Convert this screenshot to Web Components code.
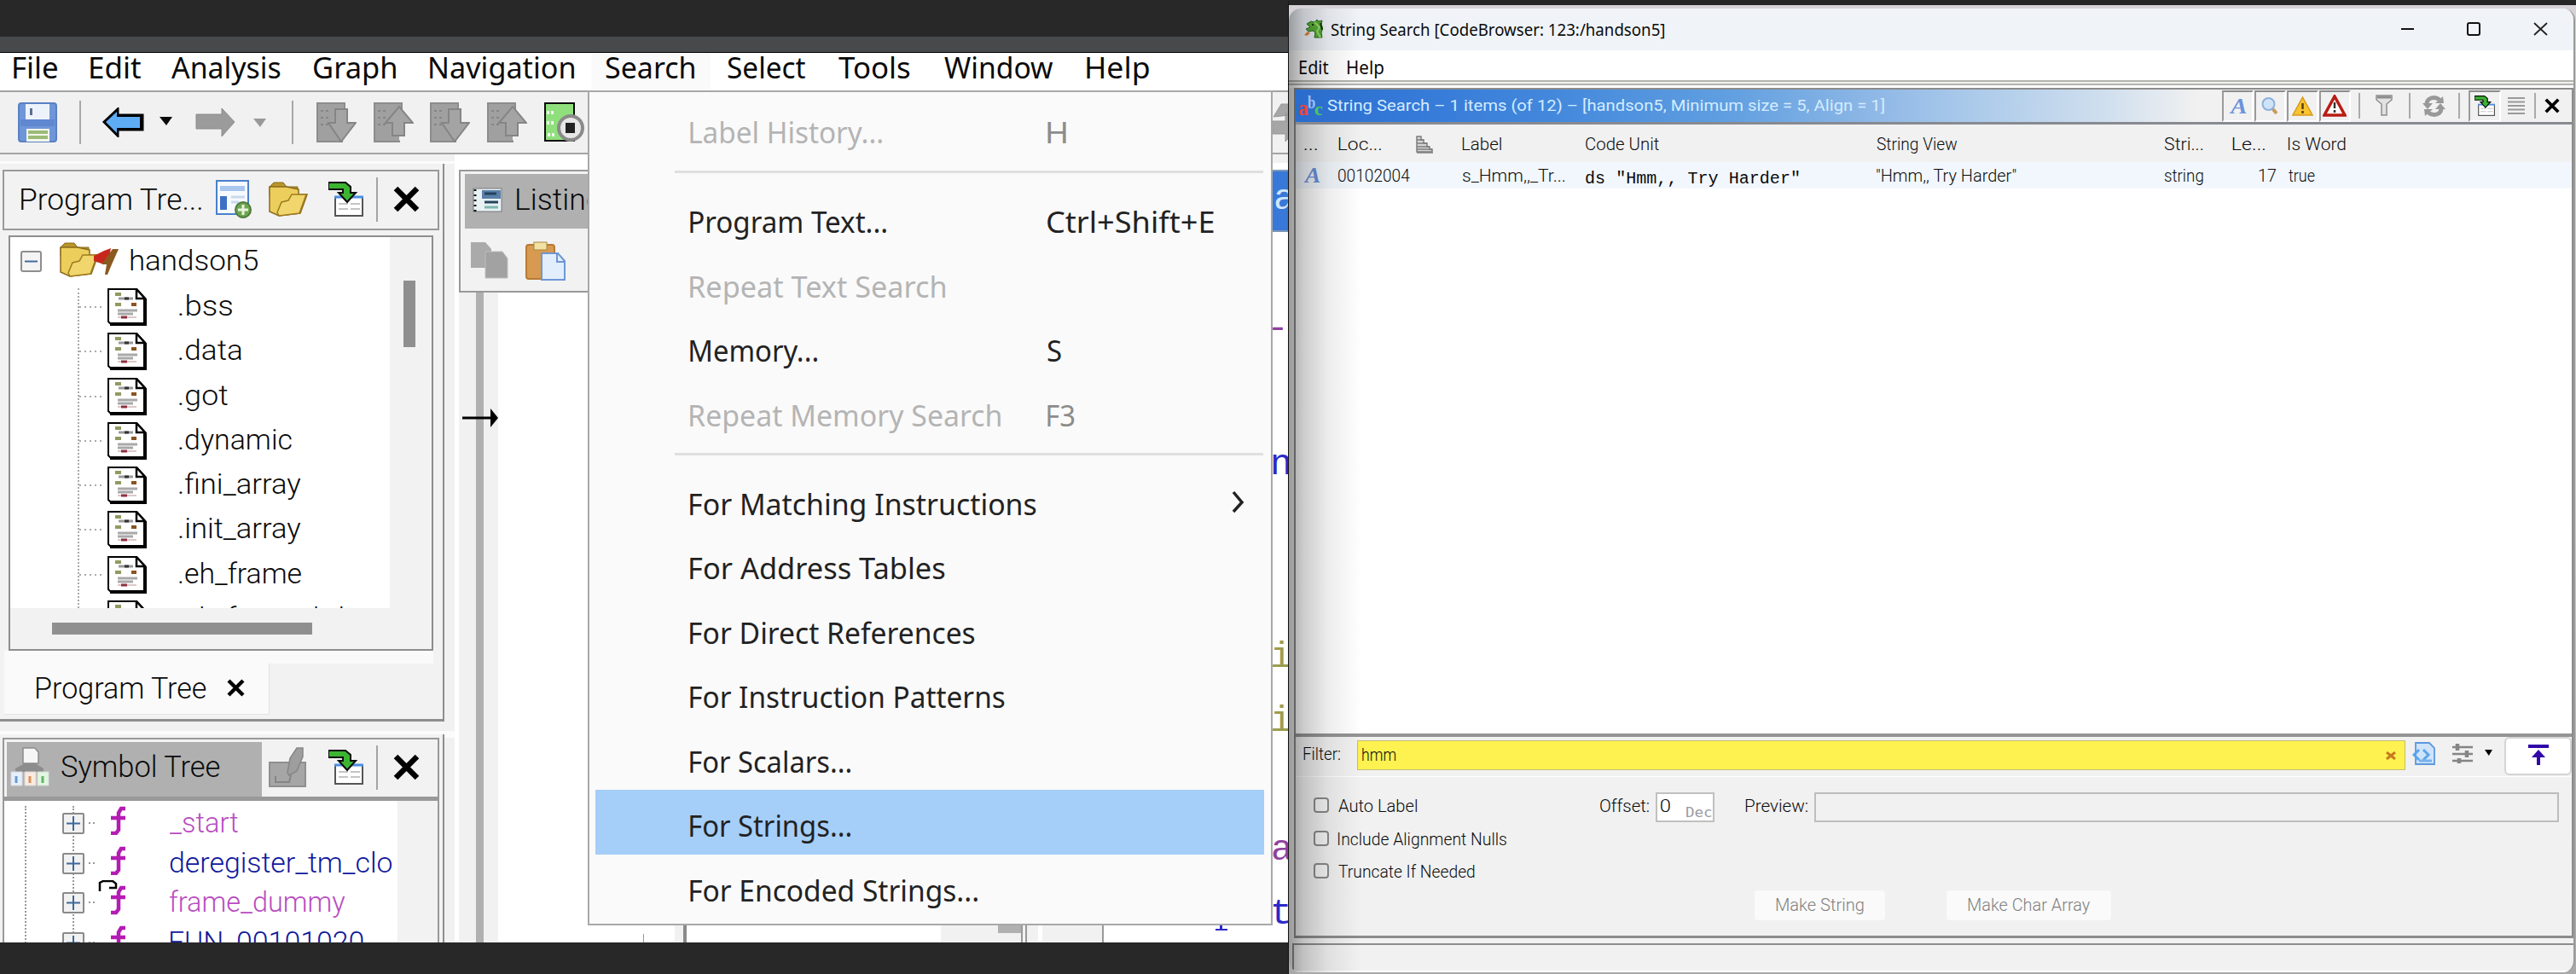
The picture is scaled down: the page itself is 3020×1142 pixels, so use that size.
<!DOCTYPE html>
<html lang="en">
<head>
<meta charset="utf-8">
<title>CodeBrowser</title>
<style>
  body {
    margin: 0;
    display: flex;
    width: 3020px;
    height: 1142px;
    overflow: hidden;
    background: #282828;
    font-family: Roboto, "Liberation Sans", sans-serif;
    font-weight: 300;
    color: #0a0a0a;
  }
</style>
</head>
<body>
<code-browser></code-browser>
<search-window></search-window>

<script>
function define(name, html) {
  const template = document.createElement('template');
  template.innerHTML = html;
  customElements.define(name, class extends HTMLElement {
    constructor() {
      super();
      this.attachShadow({ mode: 'open' });
      this.shadowRoot.appendChild(template.content.cloneNode(true));
    }
  });
}

const ctx = document.createElement('canvas').getContext('2d');

// One line of text squeezed to an ink width (w), with its baseline b pixels below the top.
class FitText extends HTMLElement {
  constructor() {
    super();
    this.attachShadow({ mode: 'open' });
    this.shadowRoot.innerHTML = `
      <style>
        :host { display: block; flex: none; }
        span { display: block; width: max-content; white-space: nowrap; transform-origin: 0 0; }
      </style>
      <span><slot></slot></span>`;
  }

  connectedCallback() {
    const cs = getComputedStyle(this);
    ctx.font = `${cs.fontStyle} ${cs.fontWeight} ${cs.fontSize} ${cs.fontFamily}`;
    const m = ctx.measureText(this.textContent);
    const left = -m.actualBoundingBoxLeft;
    const ink = m.actualBoundingBoxRight - left;
    const w = parseFloat(this.getAttribute('w')) || ink;
    const b = parseFloat(this.getAttribute('b'));
    const mid = (m.fontBoundingBoxAscent - m.fontBoundingBoxDescent) / 2;
    const line = 2 * (b - mid) + 'px';
    this.style.width = w + 'px';
    this.style.height = line;
    this.style.lineHeight = line;
    const span = this.shadowRoot.querySelector('span');
    span.style.transform = `scaleX(${w / ink}) translateX(${-left}px)`;
  }
}
customElements.define('fit-text', FitText);

const sheet = (inner) => `<path d="M1 1h22l10 0v38H1z" fill="#a0a0a0" stroke="#8c8c8c" stroke-width="2"/>
  <path d="M5 10h12M5 18h10M5 26h12" stroke="#858585" stroke-width="2" stroke-dasharray="3 3"/>
  <path d="M1 38v8h30" fill="none" stroke="#8c8c8c" stroke-width="3"/><path d="M2 38h28v7H2z" fill="#a0a0a0"/>${inner}`;
const down = '<path d="M22 8h14v16h10L29 46 14 24h8z" fill="#a4a4a4" stroke="#858585" stroke-width="2"/>';
const up = '<path d="M22 39h14V24h10L30 5 14 24h8z" fill="#a4a4a4" stroke="#858585" stroke-width="2"/>';
const folder = '<path d="M1 6l5-5h11l4 5h13v10H1z" fill="#b8962a" stroke="#8a6a1c"/><path d="M1 6h20l14 3v6l10 0-8 22-25 3L1 35z" fill="#ecce5c" stroke="#8a6a1c" stroke-width="1.5"/><path d="M10 36l5-12 8-2 4-7h17l-8 22-24 3z" fill="#f0d66c" stroke="#a07c20" stroke-width="1.5"/>';

const icons = {
  save: ['0 0 46 47', `<rect x="1" y="1" width="44" height="45" rx="3" fill="#6f96d8" stroke="#5a80c4" stroke-width="2"/>
    <rect x="9" y="2" width="28" height="18" fill="#eef3fb"/><rect x="14" y="7" width="3" height="8" fill="#5a6f98"/>
    <rect x="3" y="20" width="40" height="8" fill="#5f88d0"/><rect x="10" y="31" width="27" height="15" fill="#f2f7ec"/>
    <path d="M12 35h23M12 41h23" stroke="#9cbb78" stroke-width="4"/>`],
  back: ['0 0 49 35', `<path d="M2 17L18 2v7h29v17H18v7z" fill="#000" stroke="#000" stroke-width="3"/><path d="M4 17L17 5v6h27v13H17v6z" fill="#5eacf4"/>`],
  forward: ['0 0 47 35', '<path d="M46 17L31 1v7H1v17h30v9z" fill="#9b9b9b" stroke="#8c8c8c"/>'],
  tri: ['0 0 15 10', '<path d="M0 0h15L8 10z" fill="currentColor"/>'],
  nextdown: ['0 0 47 47', sheet(down)],
  nextup: ['0 0 47 47', sheet(up)],
  snapshot: ['0 0 47 47', `<rect x="1" y="1" width="34" height="44" fill="#8fe07c" stroke="#0c0c0c" stroke-width="2"/>
    <path d="M3 12h8M3 24h8M4 38h9" stroke="#f4f4f4" stroke-width="4" stroke-dasharray="3 2"/>
    <circle cx="31" cy="30" r="14" fill="#e6e6e6" stroke="#8a8a8a" stroke-width="4"/><rect x="25" y="24" width="11" height="12" fill="#222"/>`],
  grayarrow: ['0 0 30 47', '<path d="M1 17l9-15 14 0-4 13zM0 22h15V12l15 16-15 18V37H0z" fill="#a6a6a6" stroke="#979797"/>'],
  newtree: ['0 0 43 45', `<rect x="1" y="1" width="37" height="39" fill="#f6faff" stroke="#4a80cc" stroke-width="2"/><rect x="5" y="7" width="29" height="6" fill="#a9c6ee"/>
    <rect x="5" y="19" width="8" height="16" fill="#3d6fc4"/><path d="M18 20h16M18 26h9" stroke="#cbd9ee" stroke-width="3"/>
    <circle cx="32" cy="35" r="9" fill="#6ea552" stroke="#4f7c3a" stroke-width="2"/><path d="M32 29v12M26 35h12" stroke="#e8f4dc" stroke-width="3"/>`],
  folder: ['0 0 46 41', folder],
  folderopen: ['0 0 70 42', folder + '<path d="M40 16l12-6 8-3-3 16-8 2-9-3z" fill="#c8281c"/><path d="M62 8h7l-8 18-5 12h-3l2-12-6 0z" fill="#8a5a20"/>'],
  snap: ['0 0 41 41', `<rect x="8" y="18" width="32" height="22" fill="#fff" stroke="#555" stroke-width="2"/><path d="M7 18h34" stroke="#4a90e0" stroke-width="3"/>
    <path d="M12 26h11M26 26h11M12 32h11M26 32h11" stroke="#c4c4c4" stroke-width="2"/>
    <path d="M0 1h20l6 5v7h6L22 24 12 13h5V9H0z" fill="#3cb432" stroke="#0a0a0a" stroke-width="2"/>`],
  cross: ['0 0 31 31', '<path d="M3 3l25 25M28 3L3 28" stroke="#000" stroke-width="6.5"/>'],
  doc: ['0 0 46 44', `<path d="M1 1h33l10 11v30H4l-3-3z" fill="#fff" stroke="#000" stroke-width="2"/><path d="M3 42h41V13" fill="none" stroke="#000" stroke-width="4"/><path d="M34 1v11h10z" fill="#fff" stroke="#000" stroke-width="2.5"/>
    <path d="M9 7h7" stroke="#8f9a62" stroke-width="4"/><path d="M13 12h17" stroke="#9a9a9a" stroke-width="3"/><path d="M20 12h5" stroke="#333" stroke-width="3"/>
    <path d="M9 19h7" stroke="#8f9a62" stroke-width="4"/><path d="M28 19h6" stroke="#8a5420" stroke-width="4"/><path d="M12 26h23M12 30h18" stroke="#a9a9a9" stroke-width="3"/><path d="M12 34h22" stroke="#dcc8c8" stroke-width="2"/><path d="M16 34h7" stroke="#8c3040" stroke-width="3"/>`],
  minus: ['0 0 25 25', '<rect x="1" y="1" width="23" height="23" rx="2" fill="#f4f4f4" stroke="#8e8e8e" stroke-width="2"/><path d="M5 12.500h15" stroke="#456aa0" stroke-width="2"/>'],
  plus: ['0 0 26 25', '<rect x="1" y="1" width="24" height="23" rx="1" fill="#f1f1f1" stroke="#8a8a8a" stroke-width="2"/><path d="M5 12.500h16M13 4v17" stroke="#3f689c" stroke-width="2"/>'],
  func: ['0 0 20 34', '<path d="M18 3h-5l-3 5v20l-3 4H1M1 14h17" fill="none" stroke="#b41cb4" stroke-width="4.500"/>'],
  thunk: ['0 0 34 47', '<path d="M2 13V3l4-2h11l4 3v5h-8" fill="none" stroke="#000" stroke-width="2.500"/><g transform="translate(14 6)"><path d="M18 3h-5l-3 5v20l-3 4H1M1 14h17" fill="none" stroke="#b41cb4" stroke-width="4.500"/></g>'],
  symtree: ['0 0 46 46', `<path d="M15 1h14l4 5v13H15z" fill="#f6f6f6" stroke="#8c8c8c" stroke-width="1.500"/><path d="M17 19h12l10 6v4H6v-4z" fill="#8d8d8d"/>
    <g stroke="#d8d8d8"><path d="M1 29h13v16H1z" fill="#e4f0fb"/><path d="M17 29h13v16H17z" fill="#fbeade"/><path d="M32 29h13v16H32z" fill="#e0f6e0"/></g>
    <path d="M7 34v8" stroke="#6a9ad0" stroke-width="3"/><path d="M23 34v8" stroke="#d8925c" stroke-width="3"/><path d="M38 34v8" stroke="#64b464" stroke-width="3"/>`],
  edit: ['0 0 44 47', '<path d="M1 18h42v28H1z" fill="#a6a6a6" stroke="#8f8f8f" stroke-width="2"/><path d="M8 34v7h16l2-8" fill="none" stroke="#858585" stroke-width="2"/><path d="M22 30l3-17 8-12h7v10l-7 17-9 5z" fill="#9e9e9e" stroke="#868686" stroke-width="1.500"/>'],
  listing: ['0 0 35 29', '<rect x="1" y="1" width="33" height="27" fill="#e8f2f4" stroke="#777"/><path d="M3 2v26" stroke="#111" stroke-width="3" stroke-dasharray="2 4"/><path d="M11 3h22v10H11z" fill="#5b7fa8"/><path d="M14 7h14M14 17h16" stroke="#25425e" stroke-width="3"/><path d="M14 23h16" stroke="#7fb7b0" stroke-width="3"/>'],
  copy: ['0 0 45 44', '<path d="M1 1h17l7 8v22H1z" fill="#aaa"/><path d="M18 12h20l6 8v23H18z" fill="#a2a2a2" stroke="#bdbdbd"/>'],
  paste: ['0 0 47 46', '<rect x="1" y="4" width="33" height="40" rx="3" fill="#d79a50" stroke="#b87a34" stroke-width="2"/><rect x="10" y="1" width="15" height="9" fill="#f1e2a4" stroke="#a8863c"/><path d="M19 14h19l8 9v22H19z" fill="#e2eefc" stroke="#6d97d6" stroke-width="2"/><path d="M37 14v10h9" fill="none" stroke="#6d97d6" stroke-width="2"/>'],
  ip: ['0 0 42 22', '<path d="M0 11h34" stroke="#000" stroke-width="3"/><path d="M33 0l9 11-9 11z" fill="#000"/>'],
  chevron: ['0 0 15 27', '<path d="M2 2l10 12L2 25" fill="none" stroke="#222" stroke-width="3.500"/>'],
  dragon: ['0 0 22 23', '<path d="M3 5l5-3 4 1 3-3 2 2 4-1-1 5 2 4-2 5 1 6h-9l1-6-3-2-5 1-3-3 5-2z" fill="#58b038" stroke="#2c6a20"/><path d="M0 18l4-4 3 2-4 3z" fill="#e08838"/><path d="M12 3l6 6-3 5 4 7" fill="none" stroke="#9ade6c" stroke-width="2"/><path d="M9 6h2M19 4l2 8" stroke="#14380c" stroke-width="2"/>'],
  winmin: ['0 0 15 16', '<path d="M0 8h15" stroke="#111" stroke-width="2"/>'],
  winmax: ['0 0 16 16', '<rect x="1" y="1" width="14" height="14" rx="2" fill="none" stroke="#111" stroke-width="2"/>'],
  winclose: ['0 0 17 16', '<path d="M1 1l15 14M16 1L1 15" stroke="#222" stroke-width="1.800"/>'],
  mag: ['0 0 20 21', '<path d="M12 12l6 7" stroke="#c89c5c" stroke-width="4"/><circle cx="8.500" cy="8" r="7" fill="#cfe3f8" stroke="#8fb0dc" stroke-width="2"/>'],
  warn: ['0 0 25 23', '<path d="M12.500 1L24 22H1z" fill="#f8c430" stroke="#d89a18" stroke-width="1.500"/><path d="M12.500 8v7M12.500 17v3" stroke="#5c4010" stroke-width="2.500"/>'],
  alert: ['0 0 28 26', '<path d="M14 2l12 22H2z" fill="#fff" stroke="#b81c14" stroke-width="3.500"/><path d="M14 9v7M14 18v3" stroke="#333" stroke-width="2.500"/>'],
  funnel: ['0 0 20 26', '<path d="M1 1h18v5l-6 5v13h-6V11L1 6z" fill="#e2e2e2" stroke="#8e8e8e" stroke-width="1.500"/><path d="M2 3h16" stroke="#8e8e8e" stroke-width="3"/>'],
  refresh: ['0 0 27 27', '<path d="M5 11C5 4 14 1 20 6" fill="none" stroke="#999" stroke-width="5"/><path d="M0 10h12l-6 7zM15 10l10 0-1-8z" fill="#999"/><path d="M22 16C22 23 13 26 7 21" fill="none" stroke="#999" stroke-width="5"/><path d="M27 17H15l6-7zM12 17l-10 0 1 8z" fill="#999"/>'],
  lines: ['0 0 20 20', '<path d="M0 1h20M0 5.500h20M0 10h20M0 14.500h20M0 19h20" stroke="#9a9a9a" stroke-width="1.800"/>'],
  sort: ['0 0 20 21', '<path d="M1 1h5v4h3v4h4v4h3v3h3v3H1z" fill="#d6d6d6" stroke="#7c7c7c" stroke-width="1.500"/><path d="M1 5h8M1 9h12M1 13h15M1 16h18M1 20h19" stroke="#7c7c7c" stroke-width="1.500"/>'],
  clear: ['0 0 12 10', '<path d="M1 1l10 8M11 1L1 9" stroke="#c87820" stroke-width="3"/>'],
  regex: ['0 0 27 27', '<path d="M4 1h16l6 6v19H4z" fill="#cfe4fa" stroke="#5c98dc" stroke-width="1.800"/><path d="M8 9l-6 6 6 6M13 9l6 6-6 6" fill="none" stroke="#5aa4ec" stroke-width="3"/><path d="M8 22h15" stroke="#78b2ee" stroke-width="3"/>'],
  sliders: ['0 0 24 24', '<path d="M0 4h24M0 12h24M0 20h24" stroke="#858585" stroke-width="2.500"/><path d="M6 0v8M17 8v8M8 17v6" stroke="#858585" stroke-width="4.500"/>'],
  totop: ['0 0 24 24', '<path d="M0 2h24" stroke="#3008a8" stroke-width="4"/><path d="M12 24V12" stroke="#3008a8" stroke-width="4"/><path d="M12 6l8 9H4z" fill="#3008a8"/>'],
};

class UiIcon extends HTMLElement {
  constructor() {
    super();
    this.attachShadow({ mode: 'open' });
  }

  connectedCallback() {
    const [box, body] = icons[this.getAttribute('name')];
    const [, , w, h] = box.split(' ');
    this.shadowRoot.innerHTML = `
      <style>
        :host { display: block; flex: none; width: ${w}px; height: ${h}px; }
        svg { display: block; width: 100%; height: 100%; }
      </style>
      <svg viewBox="${box}" preserveAspectRatio="none">${body}</svg>`;
  }
}
customElements.define('ui-icon', UiIcon);

/* ---------- code browser ---------- */

define('main-menu', `
<style>
  :host { display: flex; box-sizing: border-box; height: 46px; background: #fff; border-bottom: 2px solid #a2a2a2; font: 35px "Noto Sans", sans-serif; }
  div { padding: 0 19.700px; }
  .first { padding-left: 16px; }
  .open { background: #fafafa; }
</style>
<div class="first"><fit-text w="51" b="30">File</fit-text></div>
<div><fit-text w="59" b="30">Edit</fit-text></div>
<div style="padding-left:16px"><fit-text w="128" b="30">Analysis</fit-text></div>
<div><fit-text w="96" b="30">Graph</fit-text></div>
<div><fit-text w="169" b="30">Navigation</fit-text></div>
<div class="open" style="padding-left:17px"><fit-text w="104" b="30">Search</fit-text></div>
<div><fit-text w="91" b="30">Select</fit-text></div>
<div><fit-text w="84" b="30">Tools</fit-text></div>
<div><fit-text w="128" b="30">Window</fit-text></div>
<div><fit-text w="73" b="30">Help</fit-text></div>
`);

define('main-toolbar', `
<style>
  :host { display: flex; align-items: center; height: 73px; background: #f1f1f1; border-bottom: 2px solid #a4a4a4; padding-left: 21px; box-sizing: border-box; }
  i { width: 2px; height: 51px; background: #a8a8a8; }
</style>
<ui-icon name="save"></ui-icon>
<i style="margin-left:26px"></i>
<ui-icon name="back" style="margin-left:25px"></ui-icon>
<ui-icon name="tri" style="margin-left:18px;margin-top:-3px"></ui-icon>
<ui-icon name="forward" style="margin-left:27px"></ui-icon>
<ui-icon name="tri" style="margin-left:21px;color:#999"></ui-icon>
<i style="margin-left:30px"></i>
<ui-icon name="nextdown" style="margin-left:27px"></ui-icon>
<ui-icon name="nextup" style="margin-left:20px"></ui-icon>
<ui-icon name="nextdown" style="margin-left:19px"></ui-icon>
<ui-icon name="nextup" style="margin-left:20px"></ui-icon>
<ui-icon name="snapshot" style="margin-left:20px"></ui-icon>
<ui-icon name="grayarrow" style="margin-left:auto;margin-right:-12px"></ui-icon>
`);

// Title bar of a docked panel: slot for the title part, slot "tools" for its buttons.
define('panel-header', `
<style>
  :host { display: flex; box-sizing: border-box; margin-left: 3px; width: 512px; height: 71px; border: 2px solid #999; background: #f2f2f2; font-size: 35px; }
  .tools { margin-left: auto; display: flex; align-items: center; padding-right: 21px; margin-top: -2px; }
  i { width: 2px; height: 52px; background: #a4a4a4; margin: 0 18px 0 15px; }
</style>
<slot></slot>
<div class="tools"><slot name="tools"></slot><ui-icon name="snap"></ui-icon><i></i><ui-icon name="cross"></ui-icon></div>
`);

define('tree-item', `
<style>
  :host { display: flex; height: 52.300px; }
  .dots { width: 27px; height: 2px; margin: 21px 6px 0 0; background: repeating-linear-gradient(90deg, #aaa 0 2px, transparent 2px 6px); }
  .label { margin-left: 38px; }
</style>
<div class="dots"></div>
<ui-icon name="doc"></ui-icon>
<div class="label"><slot></slot></div>
`);

define('program-tree', `
<style>
  :host { display: block; box-sizing: border-box; margin-top: 11px; width: 521px; height: 654px; padding-top: 7px; border-right: 2px solid #8e8e8e; border-bottom: 3px solid #8e8e8e; background: #f2f2f2; }
  .box { box-sizing: border-box; margin: 6px 0 0 10px; width: 498px; height: 487px; border: 2px solid #8e8e8e; display: grid; grid-template: 435px 1fr / 445px 1fr; }
  .tree { background: #fff; overflow: hidden; font-size: 33px; }
  .root { display: flex; align-items: flex-start; height: 60px; }
  .items { margin-left: 79px; border-left: 2px dotted #aaa; height: 375px; }
  .vthumb { width: 14px; height: 78px; margin: 51px 0 0 16px; background: #8f8f8f; }
  .hthumb { width: 305px; height: 14px; margin: 17px 0 0 49px; background: #8f8f8f; }
  .strip { width: 503px; height: 15px; margin-left: 5px; background: #fafafa; }
  .tab { display: flex; box-sizing: border-box; width: 311px; height: 60px; margin-left: 5px; background: #fafafa; border-right: 1px solid #e4e4e4; border-bottom: 1px solid #e4e4e4; font-size: 35px; }
</style>
<panel-header>
  <fit-text w="212" b="45" style="margin-left:20px">Program Tre...</fit-text>
  <ui-icon slot="tools" name="newtree" style="margin-right:19px"></ui-icon>
  <ui-icon slot="tools" name="folder" style="margin-right:24px"></ui-icon>
</panel-header>
<div class="box">
  <div class="tree">
    <div class="root">
      <ui-icon name="minus" style="margin:16px 21px 0 12px"></ui-icon>
      <ui-icon name="folderopen" style="margin-top:6px"></ui-icon>
      <fit-text w="149" b="39" style="margin-left:13px">handson5</fit-text>
    </div>
    <div class="items">
      <tree-item><fit-text w="62" b="32">.bss</fit-text></tree-item>
      <tree-item><fit-text w="73" b="32">.data</fit-text></tree-item>
      <tree-item><fit-text w="57" b="32">.got</fit-text></tree-item>
      <tree-item><fit-text w="132" b="32">.dynamic</fit-text></tree-item>
      <tree-item><fit-text w="143" b="32">.fini_array</fit-text></tree-item>
      <tree-item><fit-text w="143" b="32">.init_array</fit-text></tree-item>
      <tree-item><fit-text w="143" b="32">.eh_frame</fit-text></tree-item>
      <tree-item><fit-text w="205" b="32">.eh_frame_hdr</fit-text></tree-item>
    </div>
  </div>
  <div><div class="vthumb"></div></div>
  <div><div class="hthumb"></div></div>
</div>
<div class="strip"></div>
<div class="tab">
  <fit-text w="199" b="41" style="margin-left:38px">Program Tree</fit-text>
  <ui-icon name="cross" style="width:21px;height:21px;margin:18px 0 0 24px"></ui-icon>
</div>
`);

define('symbol-item', `
<style>
  :host { display: flex; height: 46.500px; margin-left: -14px; }
  .dots { width: 8px; height: 2px; margin: 19px 17px 0 5px; background: repeating-linear-gradient(90deg, #999 0 2px, transparent 2px 5px); }
  .plus { margin-top: 8px; }
  .label { margin-left: 50px; }
</style>
<ui-icon class="plus" name="plus"></ui-icon>
<div class="dots"></div>
<slot name="icon"><ui-icon name="func"></ui-icon></slot>
<div class="label"><slot></slot></div>
`);

define('symbol-tree', `
<style>
  :host { display: flex; flex-direction: column; box-sizing: border-box; margin-top: 15px; width: 521px; height: 244px; padding-top: 4px; border-right: 2px solid #8e8e8e; background: #f2f2f2; overflow: hidden; }
  panel-header { flex: none; }
  .title { display: flex; align-items: flex-start; width: 299px; margin: 3px 0 0 3px; background: #b0b0b0; }
  .body { flex: 1; display: flex; margin-left: 3px; width: 508px; border: solid #999; border-width: 3px 2px 0; overflow: hidden; }
  .tree { width: 461px; background: #fff; font-size: 33px; color: #10189c; padding: 6px 0 0 24px; box-sizing: border-box; }
  .outer { border-left: 2px dotted #999; padding-left: 54px; height: 180px; }
  .inner { border-left: 2px dotted #999; height: 180px; }
  .pink { color: #b84cc0; }
</style>
<panel-header>
  <div class="title">
    <ui-icon name="symtree" style="margin:6px 0 0 4px"></ui-icon>
    <fit-text w="186" b="41" style="margin-left:14px">Symbol Tree</fit-text>
  </div>
  <ui-icon slot="tools" name="edit" style="margin-right:26px"></ui-icon>
</panel-header>
<div class="body">
  <div class="tree"><div class="outer"><div class="inner">
    <symbol-item><fit-text class="pink" w="80" b="31">_start</fit-text></symbol-item>
    <symbol-item><fit-text w="261" b="31">deregister_tm_clo</fit-text></symbol-item>
    <symbol-item><ui-icon slot="icon" name="thunk" style="margin:-6px 0 0 -14px"></ui-icon><fit-text class="pink" w="206" b="31">frame_dummy</fit-text></symbol-item>
    <symbol-item><fit-text w="227" b="31">FUN_00101020</fit-text></symbol-item>
  </div></div></div>
</div>
`);

define('listing-view', `
<style>
  :host { display: flex; flex: 1; background: #fff; overflow: hidden; }
  .left { width: 151px; overflow: hidden; display: flex; flex-direction: column; font-size: 35px; }
  .head { box-sizing: border-box; flex: none; margin-top: 18px; height: 144px; border: solid #999; border-width: 2px 0 2px 2px; background: #f2f2f2; padding: 3px 0 0 5px; }
  .bar { display: flex; height: 64px; background: #b0b0b0; }
  .tools { display: flex; padding: 15px 0 0 6px; gap: 20px; }
  .margin { width: 46px; flex: 1; background: linear-gradient(90deg, #f1f1f1 20px, #b0b0b0 20px 29px, #f1f1f1 29px); padding-top: 136px; }
  .margin ui-icon { margin-left: 4px; }
  .right { flex: 1; display: flex; flex-direction: column; min-width: 0; }
  .code { flex: 1; margin-left: 802px; overflow: hidden; font: 43px "Liberation Mono", monospace; }
  .code > div { height: 75.300px; padding-left: 1px; overflow: hidden; }
  .code .top { height: 18px; padding: 0; background: linear-gradient(#f1f1f1 10px, #fff 10px); }
  .code .sel { height: 69px; border: solid #7a96b8; border-width: 2px 0; background: #3878d8; color: #cfe6fb; padding-left: 4px; }
  .blue { color: #2a2ac8; } .olive { color: #9c9c50; } .purple { color: #9040a0; }
  .below { display: flex; height: 21px; }
  .below div { flex: none; box-sizing: border-box; }
</style>
<div class="left">
  <div class="head">
    <div class="bar">
      <ui-icon name="listing" style="margin:16px 17px 0 9px"></ui-icon>
      <fit-text w="98" b="42">Listing</fit-text>
    </div>
    <div class="tools"><ui-icon name="copy"></ui-icon><ui-icon name="paste"></ui-icon></div>
  </div>
  <div class="margin"><ui-icon name="ip"></ui-icon></div>
</div>
<div class="right">
  <div class="code">
    <div class="top"></div>
    <div class="sel"><fit-text b="44">a</fit-text></div>
    <div></div>
    <div class="purple"><fit-text b="50">-_</fit-text></div>
    <div></div>
    <div class="blue"><fit-text b="58">n</fit-text></div>
    <div></div>
    <div></div>
    <div class="olive"><fit-text b="58">i</fit-text></div>
    <div class="olive"><fit-text b="58">i</fit-text></div>
    <div></div>
    <div class="purple"><fit-text b="58">a</fit-text></div>
    <div class="blue"><fit-text b="58">t</fit-text></div>
  </div>
  <div class="below">
    <div style="width:65px"></div>
    <div style="width:1px;background:#999;margin-top:11px"></div>
    <div style="width:46px;background:linear-gradient(90deg,#fff 36px,#f1f1f1 36px)"></div>
    <div style="width:302px;border-left:4px solid #8a8a8a"></div>
    <div style="width:67px;background:#f1f1f1"></div>
    <div style="width:27px;background:#f1f1f1;border-top:10px solid #b0b0b0"></div>
    <div style="width:7px;background:#f1f1f1;border:solid #999;border-width:0 2px"></div>
    <div style="width:13px;background:#f1f1f1"></div>
    <div style="width:5px"></div>
    <div style="width:72px;background:#f1f1f1;border-right:2px solid #999"></div>
    <div style="width:131px"></div>
    <div style="width:14px;height:7px;background:linear-gradient(90deg,transparent 5px,#2a2ac8 5px 8px,transparent 8px);border-bottom:2px solid #2a2ac8"></div>
  </div>
</div>
`);

define('menu-item', `
<style>
  :host { display: grid; grid-template-columns: 419px 1fr; box-sizing: border-box; height: 75.500px; margin: 0 8px 0 7px; padding-left: 111px; overflow: hidden; }
  :host([disabled]) { color: #b4b4b4; }
  :host([active]) { background: #a5cef8; }
</style>
<slot></slot><slot name="key"></slot>
`);

define('search-menu', `
<style>
  :host { display: block; position: absolute; left: 689px; top: 106px; width: 803px; height: 979px; box-sizing: border-box; border: 2px solid #a8a8a8; background: #fafafa; font: 35px "Noto Sans", sans-serif; padding-top: 5px; color: #222; }
  hr { margin: 11px 9px 15px 100px; border: 0; height: 3px; background: #e0e0e0; }
  .gray { color: #8c8c8c; }
</style>
<menu-item disabled><fit-text w="225" b="55">Label History...</fit-text><fit-text slot="key" class="gray" w="22" b="55">H</fit-text></menu-item>
<hr>
<menu-item><fit-text w="230" b="55">Program Text...</fit-text><fit-text slot="key" w="195" b="55">Ctrl+Shift+E</fit-text></menu-item>
<menu-item disabled><fit-text w="299" b="56">Repeat Text Search</fit-text></menu-item>
<menu-item><fit-text w="149" b="55">Memory...</fit-text><fit-text slot="key" w="16" b="55">S</fit-text></menu-item>
<menu-item disabled><fit-text w="364" b="56">Repeat Memory Search</fit-text><fit-text slot="key" class="gray" w="32" b="56">F3</fit-text></menu-item>
<hr>
<menu-item><fit-text w="406" b="55">For Matching Instructions</fit-text><ui-icon slot="key" name="chevron" style="margin:26px 0 0 216px"></ui-icon></menu-item>
<menu-item><fit-text w="299" b="55">For Address Tables</fit-text></menu-item>
<menu-item><fit-text w="334" b="55">For Direct References</fit-text></menu-item>
<menu-item><fit-text w="369" b="55">For Instruction Patterns</fit-text></menu-item>
<menu-item><fit-text w="188" b="55">For Scalars...</fit-text></menu-item>
<menu-item active><fit-text w="188" b="55">For Strings...</fit-text></menu-item>
<menu-item><fit-text w="337" b="55">For Encoded Strings...</fit-text></menu-item>
`);

define('code-browser', `
<style>
  :host { display: flex; flex-direction: column; position: relative; flex: none; width: 1510px; height: 1142px; overflow: hidden; background: #282828; }
  .caption { flex: none; margin-top: 43px; height: 18px; background: #48494b; border-bottom: 1px solid #000; }
  main-menu, main-toolbar { flex: none; }
  .work { display: flex; flex: none; height: 924px; background: #f1f1f1; overflow: hidden; }
  .side { width: 533px; background: linear-gradient(#f1f1f1 8px, #fbfbfb 8px 11px, #f1f1f1 11px 676px, #fbfbfb 676px 684px, #f1f1f1 684px); }
  .gap { width: 5px; background: #fff; }
</style>
<div class="caption"></div>
<main-menu></main-menu>
<main-toolbar></main-toolbar>
<div class="work">
  <div class="side">
    <program-tree></program-tree>
    <symbol-tree></symbol-tree>
  </div>
  <div class="gap"></div>
  <listing-view></listing-view>
</div>
<search-menu></search-menu>
`);

/* ---------- string search window ---------- */

define('window-title', `
<style>
  :host { display: flex; align-items: flex-start; height: 49px; background: #f0f4f9; font: 20px "Noto Sans", sans-serif; padding-left: 18px; }
  .buttons { display: flex; margin: 16px 30px 0 auto; gap: 62px; }
</style>
<ui-icon name="dragon" style="margin-top:13px"></ui-icon>
<fit-text w="390" b="32" style="margin-left:10px">String Search [CodeBrowser: 123:/handson5]</fit-text>
<div class="buttons"><ui-icon name="winmin"></ui-icon><ui-icon name="winmax"></ui-icon><ui-icon name="winclose"></ui-icon></div>
`);

define('search-header', `
<style>
  :host { display: flex; align-items: flex-start; position: relative; z-index: 1; height: 38px; border-bottom: 3px solid #878a90; padding-left: 3px; font-size: 19px; font-weight: 400; color: #d4ecff;
    background: linear-gradient(90deg, #2a6ccc 0, #3478d8 120px, #4388dc 300px, #5f9ee0 500px, #8fb8e6 680px, #a8c8ea 780px, #d0dfee 950px, #f1f1f1 1060px); }
  .tools { display: flex; align-items: center; height: 38px; margin-left: 396px; }
  .btn { box-sizing: border-box; width: 36.500px; height: 37px; margin-right: 1.500px; display: flex; align-items: center; justify-content: center; border: 2px solid #fff; border-top-color: #8c8c8c; border-left-color: #9a9a9a; background: #f1f1f1; }
  .tools i { width: 2px; height: 30px; background: #aaa; }
  .abc { display: flex; width: 28px; height: 32px; font: bold 22px/32px "Liberation Serif", serif; margin-right: 6px; }
  .abc fit-text { margin-right: -1px; }
  .a { font: italic bold 26px "Liberation Serif", serif; color: #6c92dc; }
</style>
<div class="abc">
  <fit-text w="12" b="30" style="color:#ee4440;font-size:26px">a</fit-text>
  <fit-text w="9" b="22" style="color:#9cc0f4">b</fit-text>
  <fit-text w="10" b="30" style="color:#4cc860">c</fit-text>
</div>
<fit-text w="653" b="25">String Search – 1 items (of 12) – [handson5, Minimum size = 5, Align = 1]</fit-text>
<div class="tools">
  <div class="btn"><fit-text class="a" w="21" b="24">A</fit-text></div>
  <div class="btn"><ui-icon name="mag"></ui-icon></div>
  <div class="btn"><ui-icon name="warn"></ui-icon></div>
  <div class="btn"><ui-icon name="alert"></ui-icon></div>
  <i style="margin-left:8px"></i>
  <ui-icon name="funnel" style="margin-left:18px"></ui-icon>
  <i style="margin-left:19px"></i>
  <ui-icon name="refresh" style="margin-left:14px"></ui-icon>
  <i style="margin-left:15px;margin-right:10px"></i>
  <div class="btn" style="width:38px"><ui-icon name="snap" style="width:24px;height:24px"></ui-icon></div>
  <ui-icon name="lines" style="margin-left:6px"></ui-icon>
  <i style="margin-left:11px"></i>
  <ui-icon name="cross" style="width:18px;height:18px;margin-left:10px"></ui-icon>
</div>
`);

define('string-table', `
<style>
  :host { display: block; height: 714px; background: #fff; border-bottom: 4px solid #949494; font-size: 19.500px; overflow: hidden; }
  .row { display: grid; grid-template-columns: 40px 145px 145px 340.500px 337.500px 80px 66px 1fr; padding-left: 10px; height: 31px; background: #f2f7fd; align-items: start; }
  .head { height: 44px; background: #f1f1f1; }
  .loc { display: flex; }
  .mono { font: 20px "Liberation Mono", monospace; }
  .a { font: italic bold 26px "Liberation Serif", serif; color: #6c92dc; }
</style>
<div class="row head">
  <fit-text w="16" b="30">...</fit-text>
  <div class="loc"><fit-text w="51" b="30">Loc...</fit-text><ui-icon name="sort" style="margin:13px 0 0 40px"></ui-icon></div>
  <fit-text w="46" b="30">Label</fit-text>
  <fit-text w="86" b="30">Code Unit</fit-text>
  <fit-text w="95" b="30">String View</fit-text>
  <fit-text w="46" b="30">Stri...</fit-text>
  <fit-text w="39" b="30">Le...</fit-text>
  <fit-text w="67" b="30">Is Word</fit-text>
</div>
<div class="row">
  <fit-text class="a" w="20" b="24" style="margin-left:-1px">A</fit-text>
  <fit-text w="84" b="23">00102004</fit-text>
  <fit-text w="121" b="23">s_Hmm,,_Tr...</fit-text>
  <fit-text class="mono" w="250" b="25">ds "Hmm,, Try Harder"</fit-text>
  <fit-text w="164" b="23">"Hmm,, Try Harder"</fit-text>
  <fit-text w="46" b="23">string</fit-text>
  <fit-text w="20" b="23" style="margin-left:31px">17</fit-text>
  <fit-text w="31" b="23">true</fit-text>
</div>
`);

define('filter-bar', `
<style>
  :host { display: flex; align-items: flex-start; height: 46px; font-size: 19.500px; padding-left: 9px; background: #f1f1f1; }
  .field { box-sizing: border-box; display: flex; width: 1229px; height: 35px; margin: 4px 8px 0 20px; padding-left: 5px; background: #fdf250; border: 1.500px solid #c4be74; }
  .top { box-sizing: border-box; width: 79px; height: 45px; margin-left: auto; border: 2px solid #d4d4d4; border-radius: 6px; background: #fff; display: flex; justify-content: center; padding-top: 7px; }
</style>
<fit-text w="43" b="27">Filter:</fit-text>
<div class="field">
  <fit-text w="39" b="23">hmm</fit-text>
  <ui-icon name="clear" style="margin:12px 10px 0 auto"></ui-icon>
</div>
<ui-icon name="regex" style="margin-top:6px"></ui-icon>
<ui-icon name="sliders" style="margin:8px 14px 0 20px"></ui-icon>
<ui-icon name="tri" style="width:9px;height:7px;margin-top:15px;color:#000"></ui-icon>
<div class="top"><ui-icon name="totop"></ui-icon></div>
`);

define('check-option', `
<style>
  :host { display: flex; align-items: flex-start; height: 38.700px; }
  i { box-sizing: border-box; width: 18px; height: 18px; margin: 4px 11px 0 0; border: 2px solid #8a8a8a; border-radius: 4px; background: #f6f6f6; }
</style>
<i></i><slot></slot>
`);

define('search-options', `
<style>
  :host { display: grid; grid-template: 133px 1fr / 357px 1fr; height: 187px; box-sizing: border-box; background: #f1f1f1; border-top: 1px solid #fff; font-size: 19.500px; }
  .checks { padding: 20px 0 0 21px; }
  .fields { display: flex; align-items: flex-start; padding-top: 18px; }
  .offset { box-sizing: border-box; display: flex; width: 69px; height: 35px; margin: 0 36px 0 8px; padding-left: 4px; background: #fff; border: 2px solid #c0c0c0; }
  .preview { box-sizing: border-box; width: 873px; height: 35px; margin-left: 8px; border: 2px solid #bdbdbd; }
  .dec { font-family: "DejaVu Sans Mono", monospace; font-size: 16px; color: #9a9aa4; margin-left: 19px; }
  .buttons { grid-column: 1 / 3; display: flex; align-items: flex-start; gap: 72px; padding-left: 538px; color: #808080; }
  .buttons div { box-sizing: border-box; height: 35px; padding: 0 25px; background: #fafafa; border-radius: 4px; }
</style>
<div class="checks">
  <check-option><fit-text w="92" b="21">Auto Label</fit-text></check-option>
  <check-option><fit-text w="197" b="21">Include Alignment Nulls</fit-text></check-option>
  <check-option><fit-text w="160" b="21">Truncate If Needed</fit-text></check-option>
</div>
<div class="fields">
  <fit-text w="57" b="23">Offset:</fit-text>
  <div class="offset"><fit-text w="11" b="21">0</fit-text><fit-text class="dec" w="30" b="27">Dec</fit-text></div>
  <fit-text w="73" b="23">Preview:</fit-text>
  <div class="preview"></div>
</div>
<div class="buttons">
  <div><fit-text w="103" b="24">Make String</fit-text></div>
  <div><fit-text w="143" b="24">Make Char Array</fit-text></div>
</div>
`);

define('search-window', `
<style>
  :host { display: block; flex: none; box-sizing: border-box; width: 1510px; height: 1142px; padding-top: 4px; border-top: 6px solid #262626; border-left: 1px solid #111; background: linear-gradient(#d6d2d6 50%, #a8a8a8); overflow: hidden; }
  .win { position: relative; width: 1508px; height: 1130px; border-radius: 14px; overflow: hidden; background: #f1f1f1; border-right: 2px solid #9a9a9a; box-sizing: border-box; }
  .menu { display: flex; height: 35px; background: #fff; font: 21px "Noto Sans", sans-serif; padding-left: 13px; gap: 22px; }
  .rule { height: 2px; border: solid #b4b4b0; border-width: 2px 0; }
  .white { height: 3px; background: #fff; }
  .panel { margin-left: 6px; width: 1496px; border: 2px solid #8c8c8c; border-width: 2px 2px 3px; }
  .status { margin: 6px 0 0 4px; height: 30px; border: 2px solid #8c8c8c; border-width: 2px 0 0 2px; border-bottom: 2px solid #fff; }
  .shade { position: absolute; inset: 0 auto 0 0; width: 85px; background: linear-gradient(90deg, rgba(0,0,0,.36), rgba(0,0,0,.2) 20%, rgba(0,0,0,.07) 55%, transparent); }
</style>
<div class="win">
  <window-title></window-title>
  <div class="menu"><fit-text w="34" b="28">Edit</fit-text><fit-text w="42" b="28">Help</fit-text></div>
  <div class="rule"></div>
  <div class="white"></div>
  <div class="panel">
    <search-header></search-header>
    <string-table></string-table>
    <filter-bar></filter-bar>
    <search-options></search-options>
  </div>
  <div class="status"></div>
  <div class="shade"></div>
</div>
`);
</script>
</body>
</html>
